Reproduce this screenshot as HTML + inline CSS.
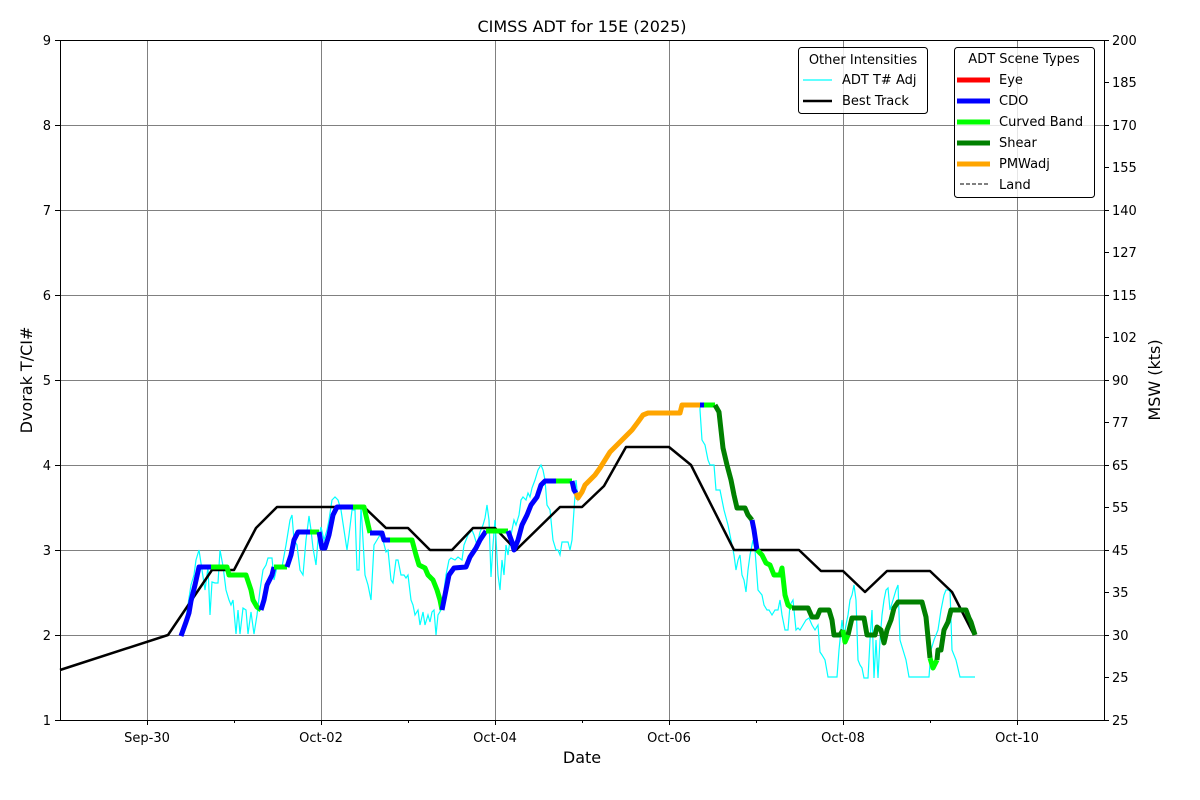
<!DOCTYPE html>
<html><head><meta charset="utf-8"><style>
html,body{margin:0;padding:0;background:#fff;}
svg{display:block;font-family:"DejaVu Sans","Liberation Sans",sans-serif;}
</style></head><body>
<svg width="1200" height="800" viewBox="0 0 1200 800" xmlns="http://www.w3.org/2000/svg">
<rect width="1200" height="800" fill="#fff"/>
<g stroke="#808080" stroke-width="1">
<line x1="60" y1="125.5" x2="1104" y2="125.5"/><line x1="60" y1="210.5" x2="1104" y2="210.5"/>
<line x1="60" y1="295.5" x2="1104" y2="295.5"/><line x1="60" y1="380.5" x2="1104" y2="380.5"/>
<line x1="60" y1="465.5" x2="1104" y2="465.5"/><line x1="60" y1="550.5" x2="1104" y2="550.5"/>
<line x1="60" y1="635.5" x2="1104" y2="635.5"/>
<line x1="147.5" y1="40" x2="147.5" y2="720"/><line x1="321.5" y1="40" x2="321.5" y2="720"/>
<line x1="495.5" y1="40" x2="495.5" y2="720"/><line x1="669.5" y1="40" x2="669.5" y2="720"/>
<line x1="843.5" y1="40" x2="843.5" y2="720"/><line x1="1017.5" y1="40" x2="1017.5" y2="720"/>
</g>
<polyline fill="none" stroke="#00ffff" stroke-width="1.2" points="183,632 186,618 189,598 191,585 194,575 196,560 199,550 202,570 205,590 208,567 210,615 212,582 215,583 218,583 220,550 223,566 226,590 229,600 231,605 233,600 236,634 238,610 240,634 243,608 246,610 248,634 251,612 254,634 257,615 260,590 263,570 266,565 268,558 272,558 274,580 277,567 282,567 286,545 290,520 292,515 294,540 297,545 300,570 303,575 306,540 309,516 311,530 313,548 316,565 318,540 321,527 324,540 327,530 329,520 332,500 335,497 338,500 341,510 344,530 347,550 349,535 352,510 355,510 357,570 359,570 361,505 363,540 365,575 368,585 371,600 374,545 377,540 380,535 383,540 386,552 388,550 391,580 393,583 396,560 398,560 401,575 404,575 406,578 408,575 411,600 413,605 415,615 418,610 420,625 423,612 425,625 428,615 430,622 432,612 434,610 436,635 438,615 441,610 443,598 446,575 449,560 451,558 455,560 458,557 462,560 464,545 468,535 472,530 474,535 477,545 480,532 483,525 485,518 487,505 489,520 491,577 493,545 495,520 498,575 500,590 502,560 504,575 506,545 508,555 510,540 512,530 514,520 516,525 519,515 521,500 523,497 526,500 528,493 530,497 532,488 535,480 538,470 541,465 543,470 545,480 547,505 550,510 553,540 556,550 558,550 560,555 562,542 565,542 568,542 570,550 572,540 574,510 576,480 578,500 581,495 590,480 605,460 625,437 643,415 680,413 682,405 697,405 700,404 700,410 702,440 705,445 708,460 710,465 714,465 716,490 720,490 722,500 724,510 728,525 732,545 734,555 736,570 738,560 740,555 742,575 744,580 746,592 748,570 750,555 753,540 755,550 758,590 762,595 764,605 767,610 769,610 772,615 775,610 778,610 780,600 782,615 785,630 788,630 790,605 793,600 796,630 798,628 800,630 803,625 806,620 809,618 812,625 815,630 818,625 820,652 822,655 825,660 828,677 831,677 834,677 837,677 839,650 842,620 844,637 846,625 848,615 850,600 852,595 854,585 856,600 858,660 860,665 862,668 864,678 868,678 870,640 872,610 874,678 876,640 878,678 880,640 882,615 884,600 886,590 888,588 890,610 893,600 896,590 898,585 900,640 903,650 906,660 909,677 914,677 920,677 926,677 929,677 931,650 934,640 938,630 941,610 944,595 946,590 950,590 952,650 956,660 960,677 966,677 975,677"/>
<polyline fill="none" stroke="#000" stroke-width="2.5" stroke-linejoin="round" points="60,670 168,635 212,570 234,570 256,528 277,507 364,507 386,528 408,528 430,550 452,550 473,528 495,528 516,550 560,507 582,507 604,486 626,447 669,447 691,465 734,550 799,550 821,571 843,571 865,592 887,571 930,571 952,592 974,635"/>
<g fill="none" stroke-width="5" stroke-linejoin="round" stroke-linecap="butt">
<polyline stroke="#0000ff" points="181,636 186,622 189,613 191,601 195,585 199,567 211,567"/>
<polyline stroke="#00ff00" points="211,567 227,567 229,575 246,575 251,590 253,600 257,607 261,610"/>
<polyline stroke="#0000ff" points="261,610 264,600 267,585 272,575 274,567"/>
<polyline stroke="#00ff00" points="274,567 287,567"/>
<polyline stroke="#0000ff" points="287,567 291,555 294,540 298,532 310,532"/>
<polyline stroke="#00ff00" points="310,532 319,532"/>
<polyline stroke="#0000ff" points="319,532 322,548 325,548 329,535 333,515 337,507 353,507"/>
<polyline stroke="#00ff00" points="353,507 364,507 367,520 370,533"/>
<polyline stroke="#0000ff" points="370,533 382,533 384,540 390,540"/>
<polyline stroke="#00ff00" points="390,540 412,540 416,555 419,565 425,568 428,575 433,580 437,590 440,600 442,610"/>
<polyline stroke="#0000ff" points="442,610 446,590 449,575 454,568 466,567 470,557 476,548 480,540 486,531"/>
<polyline stroke="#00ff00" points="486,531 508,531"/>
<polyline stroke="#0000ff" points="508,531 512,542 514,550 518,540 522,525 527,515 531,505 537,497 541,485 545,481 556,481"/>
<polyline stroke="#00ff00" points="556,481 572,481"/>
<polyline stroke="#0000ff" points="572,481 574,490 576,493"/>
<polyline stroke="#ffa500" points="576,493 578,498 582,492 585,485 590,480 595,475 600,468 605,460 610,452 617,445 625,437 632,430 638,422 643,415 648,413 680,413 682,405 700,405"/>
<polyline stroke="#0000ff" points="700,405 704,405"/>
<polyline stroke="#00ff00" points="704,405 715,405"/>
<polyline stroke="#008000" points="715,405 719,412 721,430 723,448 727,465 731,480 734,495 737,508 745,508 748,515 752,520"/>
<polyline stroke="#0000ff" points="752,520 754,530 757,550"/>
<polyline stroke="#00ff00" points="757,550 762,555 766,563 770,565 774,575 780,575 782,568 785,595 788,605 792,608"/>
<polyline stroke="#008000" points="792,608 808,608 812,617 817,617 820,610 829,610 832,620 834,635 840,635 843,630"/>
<polyline stroke="#00ff00" points="843,630 845,642 848,635"/>
<polyline stroke="#008000" points="848,635 852,618 864,618 867,635 875,635 877,627 881,630 884,643 887,630 891,620 894,608 898,602 922,602 926,617 930,658"/>
<polyline stroke="#00ff00" points="930,658 933,668 937,660"/>
<polyline stroke="#008000" points="937,660 938,650 941,650 944,630 948,622 951,610 966,610 969,618 971,622 975,635"/>
</g>
<rect x="60.5" y="40.5" width="1044" height="680" fill="none" stroke="#000" stroke-width="1"/>
<g stroke="#000" stroke-width="1">
<line x1="55" y1="40.5" x2="60" y2="40.5"/><line x1="55" y1="125.5" x2="60" y2="125.5"/><line x1="55" y1="210.5" x2="60" y2="210.5"/><line x1="55" y1="295.5" x2="60" y2="295.5"/><line x1="55" y1="380.5" x2="60" y2="380.5"/><line x1="55" y1="465.5" x2="60" y2="465.5"/><line x1="55" y1="550.5" x2="60" y2="550.5"/><line x1="55" y1="635.5" x2="60" y2="635.5"/><line x1="55" y1="720.5" x2="60" y2="720.5"/>
<line x1="1104" y1="40.5" x2="1109" y2="40.5"/><line x1="1104" y1="82.5" x2="1109" y2="82.5"/><line x1="1104" y1="125.5" x2="1109" y2="125.5"/><line x1="1104" y1="167.5" x2="1109" y2="167.5"/><line x1="1104" y1="210.5" x2="1109" y2="210.5"/><line x1="1104" y1="252.5" x2="1109" y2="252.5"/><line x1="1104" y1="295.5" x2="1109" y2="295.5"/><line x1="1104" y1="337.5" x2="1109" y2="337.5"/><line x1="1104" y1="380.5" x2="1109" y2="380.5"/><line x1="1104" y1="422.5" x2="1109" y2="422.5"/><line x1="1104" y1="465.5" x2="1109" y2="465.5"/><line x1="1104" y1="507.5" x2="1109" y2="507.5"/><line x1="1104" y1="550.5" x2="1109" y2="550.5"/><line x1="1104" y1="592.5" x2="1109" y2="592.5"/><line x1="1104" y1="635.5" x2="1109" y2="635.5"/><line x1="1104" y1="677.5" x2="1109" y2="677.5"/><line x1="1104" y1="720.5" x2="1109" y2="720.5"/>
<line x1="147.5" y1="720" x2="147.5" y2="725"/><line x1="321.5" y1="720" x2="321.5" y2="725"/><line x1="495.5" y1="720" x2="495.5" y2="725"/><line x1="669.5" y1="720" x2="669.5" y2="725"/><line x1="843.5" y1="720" x2="843.5" y2="725"/><line x1="1017.5" y1="720" x2="1017.5" y2="725"/>
<line x1="234.5" y1="720" x2="234.5" y2="723"/><line x1="408.5" y1="720" x2="408.5" y2="723"/><line x1="582.5" y1="720" x2="582.5" y2="723"/><line x1="756.5" y1="720" x2="756.5" y2="723"/><line x1="930.5" y1="720" x2="930.5" y2="723"/>
</g>
<g font-size="13" fill="#000">
<g text-anchor="end">
<text x="51" y="45">9</text><text x="51" y="130">8</text><text x="51" y="215">7</text><text x="51" y="300">6</text><text x="51" y="385">5</text><text x="51" y="470">4</text><text x="51" y="555">3</text><text x="51" y="640">2</text><text x="51" y="725">1</text>
</g>
<g text-anchor="start">
<text x="1112" y="45">200</text><text x="1112" y="87">185</text><text x="1112" y="130">170</text><text x="1112" y="172">155</text><text x="1112" y="215">140</text><text x="1112" y="257">127</text><text x="1112" y="300">115</text><text x="1112" y="342">102</text><text x="1112" y="385">90</text><text x="1112" y="427">77</text><text x="1112" y="470">65</text><text x="1112" y="512">55</text><text x="1112" y="555">45</text><text x="1112" y="597">35</text><text x="1112" y="640">30</text><text x="1112" y="682">25</text><text x="1112" y="725">25</text>
</g>
<g text-anchor="middle">
<text x="147" y="742">Sep-30</text><text x="321" y="742">Oct-02</text><text x="495" y="742">Oct-04</text><text x="669" y="742">Oct-06</text><text x="843" y="742">Oct-08</text><text x="1017" y="742">Oct-10</text>
</g>
</g>
<text x="582" y="32" font-size="16" text-anchor="middle">CIMSS ADT for 15E (2025)</text>
<text x="582" y="763" font-size="16" text-anchor="middle">Date</text>
<text transform="translate(32,380) rotate(-90)" font-size="16" text-anchor="middle">Dvorak T/CI#</text>
<text transform="translate(1160,380) rotate(-90)" font-size="16" text-anchor="middle">MSW (kts)</text>
<rect x="798.5" y="47.5" width="129" height="66" rx="3" fill="#fff" fill-opacity="0.8" stroke="#000" stroke-width="1"/>
<text x="863" y="64" font-size="13" text-anchor="middle">Other Intensities</text>
<line x1="803" y1="80" x2="832" y2="80" stroke="#00ffff" stroke-width="1.2"/>
<text x="842" y="84" font-size="13">ADT T# Adj</text>
<line x1="803" y1="101" x2="832" y2="101" stroke="#000" stroke-width="2.5"/>
<text x="842" y="105" font-size="13">Best Track</text>
<rect x="954.5" y="47.5" width="140" height="150" rx="3" fill="#fff" fill-opacity="0.8" stroke="#000" stroke-width="1"/>
<text x="1024" y="63" font-size="13" text-anchor="middle">ADT Scene Types</text>
<g stroke-width="5">
<line x1="957" y1="80" x2="990" y2="80" stroke="#ff0000"/>
<line x1="957" y1="101" x2="990" y2="101" stroke="#0000ff"/>
<line x1="957" y1="122" x2="990" y2="122" stroke="#00ff00"/>
<line x1="957" y1="143" x2="990" y2="143" stroke="#008000"/>
<line x1="957" y1="164" x2="990" y2="164" stroke="#ffa500"/>
</g>
<line x1="960" y1="184" x2="988" y2="184" stroke="#000" stroke-width="1" stroke-dasharray="4,2"/>
<g font-size="13">
<text x="999" y="84">Eye</text><text x="999" y="105">CDO</text><text x="999" y="126">Curved Band</text><text x="999" y="147">Shear</text><text x="999" y="168">PMWadj</text><text x="999" y="189">Land</text>
</g>
</svg>
</body></html>
